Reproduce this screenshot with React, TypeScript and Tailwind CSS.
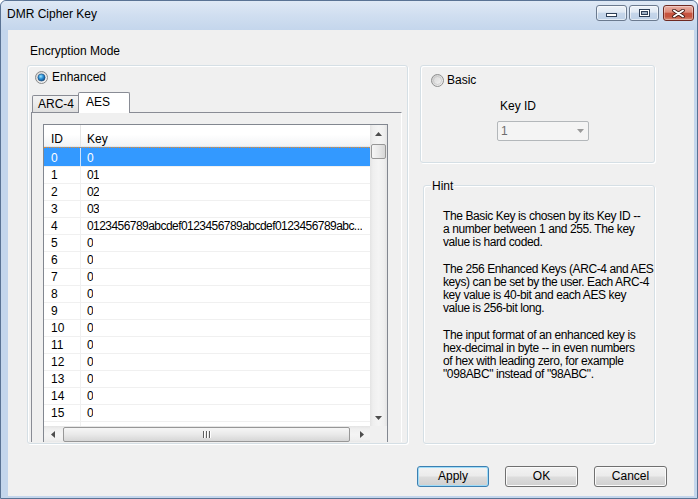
import React from "react";

const F = "font-['Liberation_Sans',Arial,sans-serif]";

function RadioOn() {
  return (
    <svg width="13" height="13" viewBox="0 0 13 13" className="shrink-0">
      <defs>
        <linearGradient id="rOnBg" x1="0" y1="0" x2="1" y2="1">
          <stop offset="0" stopColor="#d0d0d0" />
          <stop offset="1" stopColor="#fbfbfb" />
        </linearGradient>
        <radialGradient id="rOnDot" cx="0.4" cy="0.35" r="0.75">
          <stop offset="0" stopColor="#9ce6ff" />
          <stop offset="0.45" stopColor="#2b8fd6" />
          <stop offset="1" stopColor="#0c3d74" />
        </radialGradient>
      </defs>
      <circle cx="6.5" cy="6.5" r="6" fill="url(#rOnBg)" stroke="#8a8a8a" />
      <circle cx="6.5" cy="6.5" r="3.6" fill="url(#rOnDot)" stroke="#1b4a78" strokeWidth="0.6" />
    </svg>
  );
}

function RadioOff() {
  return (
    <svg width="13" height="13" viewBox="0 0 13 13" className="shrink-0">
      <defs>
        <linearGradient id="rOffBg" x1="0" y1="0" x2="1" y2="1">
          <stop offset="0" stopColor="#c9c9c9" />
          <stop offset="1" stopColor="#f6f6f6" />
        </linearGradient>
        <linearGradient id="rOffIn" x1="0" y1="0" x2="1" y2="1">
          <stop offset="0" stopColor="#d8d8d8" />
          <stop offset="1" stopColor="#f2f2f2" />
        </linearGradient>
      </defs>
      <circle cx="6.5" cy="6.5" r="6" fill="url(#rOffBg)" stroke="#8e8f8f" />
      <circle cx="6.5" cy="6.5" r="4" fill="url(#rOffIn)" stroke="#bdbdbd" strokeWidth="0.6" />
    </svg>
  );
}

function Tri({ dir, color = "#4d4d4d" }: { dir: "up" | "down" | "left" | "right"; color?: string }) {
  if (dir === "up")
    return (
      <svg width="7" height="4" viewBox="0 0 7 4"><path d="M0 4 L3.5 0 L7 4 Z" fill={color} /></svg>
    );
  if (dir === "down")
    return (
      <svg width="7" height="4" viewBox="0 0 7 4"><path d="M0 0 L7 0 L3.5 4 Z" fill={color} /></svg>
    );
  if (dir === "left")
    return (
      <svg width="4" height="7" viewBox="0 0 4 7"><path d="M4 0 L4 7 L0 3.5 Z" fill={color} /></svg>
    );
  return (
    <svg width="4" height="7" viewBox="0 0 4 7"><path d="M0 0 L4 3.5 L0 7 Z" fill={color} /></svg>
  );
}

function Grip() {
  return (
    <svg width="8" height="7" viewBox="0 0 8 7">
      <rect x="0" y="0" width="1" height="7" fill="#5f5f5f" />
      <rect x="1" y="0" width="1" height="7" fill="#ffffff" />
      <rect x="3" y="0" width="1" height="7" fill="#5f5f5f" />
      <rect x="4" y="0" width="1" height="7" fill="#ffffff" />
      <rect x="6" y="0" width="1" height="7" fill="#5f5f5f" />
      <rect x="7" y="0" width="1" height="7" fill="#ffffff" />
    </svg>
  );
}

function TitleBar() {
  return (
    <div className="flex h-[29px] shrink-0 items-start justify-between bg-[linear-gradient(#dfe9f5,#d0def0_50%,#c4d6ec)] rounded-t-[5px]">
      <div className="pl-[6px] pt-[6px] leading-[14px] text-[12px] text-black">DMR Cipher Key</div>
      <div className="mt-[4px] mr-[3px] flex h-[16px]">
        <div className="flex w-[31px] h-[16px] items-end justify-center pb-[3px] rounded-[3px] border border-[#6b7a8f] bg-[linear-gradient(#eef3f9,#dfe8f3_45%,#c6d6ea_50%,#bdd0e7)] shadow-[inset_0_0_0_1px_rgba(255,255,255,0.55)]">
          <svg width="11" height="4" viewBox="0 0 11 4">
            <rect x="0.5" y="0.5" width="10" height="3" fill="#ffffff" stroke="#2e3f57" />
          </svg>
        </div>
        <div className="ml-[2px] flex w-[30px] h-[16px] items-center justify-center rounded-[3px] border border-[#6b7a8f] bg-[linear-gradient(#eef3f9,#dfe8f3_45%,#c6d6ea_50%,#bdd0e7)] shadow-[inset_0_0_0_1px_rgba(255,255,255,0.55)]">
          <svg width="11" height="8" viewBox="0 0 11 8">
            <rect x="0.5" y="0.5" width="10" height="7" fill="#ffffff" stroke="#2e3f57" />
            <rect x="2.5" y="2.5" width="6" height="3" fill="#9fb0c5" stroke="#2e3f57" />
          </svg>
        </div>
        <div className="ml-[4px] flex w-[31px] h-[16px] items-center justify-center rounded-[3px] border border-[#6e2a22] bg-[linear-gradient(#e9b0a4,#dc8a79_45%,#c8533f_50%,#c55540_75%,#d88c76)] shadow-[inset_0_0_0_1px_rgba(255,255,255,0.35)]">
          <svg width="13" height="9" viewBox="0 0 13 9">
            <path d="M2 1.5 L11 7.5 M11 1.5 L2 7.5" stroke="#3b1712" strokeWidth="3.6" strokeLinecap="round" />
            <path d="M2 1.5 L11 7.5 M11 1.5 L2 7.5" stroke="#ffffff" strokeWidth="2" strokeLinecap="round" />
          </svg>
        </div>
      </div>
    </div>
  );
}

const keys: string[] = [
  "0",
  "01",
  "02",
  "03",
  "0123456789abcdef0123456789abcdef0123456789abc...",
  "0",
  "0",
  "0",
  "0",
  "0",
  "0",
  "0",
  "0",
  "0",
  "0",
  "0",
];

function ListView() {
  return (
    <div className="flex w-[345px] h-[320px] shrink-0 flex-col border border-[#828790] bg-white">
      <div className="flex h-[301px]">
        <div className="flex w-[326px] flex-col overflow-hidden">
          <div className="flex h-[22px] shrink-0 border-b border-[#e5e5e5] bg-[linear-gradient(#ffffff,#ffffff_45%,#f2f3f5)]">
            <div className="w-[37px] shrink-0 border-r border-[#e5e5e5] pl-[7px] pt-[7px] leading-[14px]">ID</div>
            <div className="pl-[6px] pt-[7px] leading-[14px]">Key</div>
          </div>
          {keys.map((k, i) =>
            i === 0 ? (
              <div
                key={i}
                className="flex h-[19px] shrink-0 border-t border-dotted border-t-[#e8892a] bg-[#3399ff] text-white"
              >
                <div className="w-[37px] shrink-0 border-r border-[#cfe3fb] pl-[7px] pt-[3px] leading-[15px]">{i}</div>
                <div className="pl-[6px] pt-[3px] leading-[15px] whitespace-nowrap">{k}</div>
              </div>
            ) : (
              <div key={i} className="flex h-[17px] shrink-0 border-t border-[#f0f0f0]">
                <div className="w-[37px] shrink-0 border-r border-[#f0f0f0] pl-[7px] leading-[16px]">{i}</div>
                <div className="overflow-hidden pl-[6px] leading-[16px] whitespace-nowrap tracking-[-0.55px]">{k}</div>
              </div>
            )
          )}
          <div className="flex h-[17px] shrink-0 border-t border-[#f0f0f0]">
            <div className="w-[37px] shrink-0 border-r border-[#f0f0f0]" />
          </div>
        </div>
        <div className="flex w-[17px] h-[301px] flex-col bg-[linear-gradient(90deg,#e4e4e4,#efefef_18%,#f4f4f4_50%,#efefef_82%,#e4e4e4)]">
          <div className="flex h-[17px] items-center justify-center">
            <Tri dir="up" />
          </div>
          <div className="mx-[1px] mt-[2px] h-[15px] rounded-[2px] border border-[#979797] bg-[linear-gradient(90deg,#f6f6f6,#e9e9e9_50%,#d6d6d6)]" />
          <div className="flex-1" />
          <div className="flex h-[17px] items-center justify-center">
            <Tri dir="down" />
          </div>
        </div>
      </div>
      <div className="flex h-[17px]">
        <div className="flex w-[326px] h-[17px] items-center bg-[linear-gradient(#e4e4e4,#efefef_18%,#f4f4f4_50%,#efefef_82%,#e4e4e4)]">
          <div className="flex w-[17px] h-[17px] items-center justify-center">
            <Tri dir="left" />
          </div>
          <div className="ml-[2px] flex w-[287px] h-[15px] items-center justify-center rounded-[2px] border border-[#979797] bg-[linear-gradient(#f6f6f6,#e9e9e9_50%,#d6d6d6)]">
            <Grip />
          </div>
          <div className="flex-1" />
          <div className="flex w-[17px] h-[17px] items-center justify-center">
            <Tri dir="right" />
          </div>
        </div>
        <div className="w-[17px] h-[17px] bg-[#f0f0f0]" />
      </div>
    </div>
  );
}

const groupCls =
  "rounded-[3px] border border-[#d5dfe5] shadow-[inset_1px_1px_0_#ffffff,1px_1px_0_#ffffff]";

const btnCls =
  "flex h-[21px] items-center justify-center rounded-[3px] border leading-[19px] text-[12px] text-black bg-[linear-gradient(#f3f3f3,#ebebeb_48%,#dddddd_52%,#cfcfcf)]";

function Client() {
  return (
    <div className="flex w-[686px] h-[466px] shrink-0 flex-col bg-[#f0f0f0]">
      <div className="ml-[22px] mt-[14px] h-[14px] leading-[14px]">Encryption Mode</div>
      <div className="mt-[7px] flex">
        <div className={`ml-[19px] flex w-[381px] h-[379px] flex-col ${groupCls}`}>
          <div className="ml-[7px] mt-[4px] flex h-[14px] items-center gap-[4px]">
            <RadioOn />
            <span className="leading-[14px]">Enhanced</span>
          </div>
          <div className="relative z-10 ml-[4px] mt-[8px] flex h-[21px] items-end">
            <div className="mb-[1px] w-[48px] h-[17px] rounded-t-[2px] border border-b-0 border-[#898c95] bg-[linear-gradient(#f3f3f3,#ebebeb_50%,#dedede)] pl-[5px] pt-[1px] leading-[14px]">
              ARC-4
            </div>
            <div className="-ml-[2px] w-[52px] h-[21px] rounded-t-[2px] border border-b-0 border-[#898c95] bg-white pl-[7px] pt-[2px] leading-[14px]">
              AES
            </div>
          </div>
          <div className="-mt-[1px] ml-[3px] w-[371px] h-[330px] overflow-hidden border-t border-l border-r border-[#898c95] border-r-white pl-[11px] pt-[11px]">
            <ListView />
          </div>
        </div>
        <div className="ml-[12px] flex flex-col">
          <div className={`flex w-[235px] h-[98px] flex-col ${groupCls}`}>
            <div className="ml-[10px] mt-[7px] flex h-[14px] items-center gap-[3px]">
              <RadioOff />
              <span className="leading-[14px]">Basic</span>
            </div>
            <div className="ml-[79px] mt-[12px] h-[14px] leading-[14px]">Key ID</div>
            <div className="ml-[76px] mt-[8px] flex w-[92px] h-[20px] items-center justify-between rounded-[2px] border border-[#b3b7ba] bg-[#f4f4f4] pl-[3px] pr-[4px] text-[#6d6d6d]">
              <span className="leading-[14px]">1</span>
              <Tri dir="down" color="#9a9a9a" />
            </div>
          </div>
          <div className={`ml-[3px] mt-[22px] flex w-[232px] h-[259px] flex-col ${groupCls}`}>
            <span className="-mt-[7px] ml-[7px] self-start bg-[#f0f0f0] px-[1px] leading-[14px]">Hint</span>
            <div className="ml-[19px] mt-[17px] leading-[13px] whitespace-nowrap tracking-[-0.4px]">
              <p className="mb-[14px]">
                The Basic Key is chosen by its Key ID --
                <br />a number between 1 and 255. The key
                <br />value is hard coded.
              </p>
              <p className="mb-[14px]">
                The 256 Enhanced Keys (ARC-4 and AES
                <br />keys) can be set by the user. Each ARC-4
                <br />key value is 40-bit and each AES key
                <br />value is 256-bit long.
              </p>
              <p>
                The input format of an enhanced key is
                <br />hex-decimal in byte -- in even numbers
                <br />of hex with leading zero, for example
                <br />"098ABC" instead of "98ABC".
              </p>
            </div>
          </div>
        </div>
      </div>
      <div className="ml-[409px] mt-[22px] flex gap-[16px]">
        <button className={`${btnCls} w-[72px] border-[#3c7fb1] shadow-[inset_0_0_0_1px_#9fdcf8]`}>Apply</button>
        <button className={`${btnCls} w-[73px] border-[#707070] shadow-[inset_0_0_0_1px_#fbfbfb]`}>OK</button>
        <button className={`${btnCls} w-[73px] border-[#707070] shadow-[inset_0_0_0_1px_#fbfbfb]`}>Cancel</button>
      </div>
    </div>
  );
}

export default function App() {
  return (
    <div
      className={`${F} flex w-[698px] h-[499px] flex-col overflow-hidden rounded-t-[6px] border border-[#5a7394] bg-[#c4d6ec] text-[12px] text-black`}
    >
      <TitleBar />
      <div className="flex pl-[7px]">
        <Client />
      </div>
    </div>
  );
}
